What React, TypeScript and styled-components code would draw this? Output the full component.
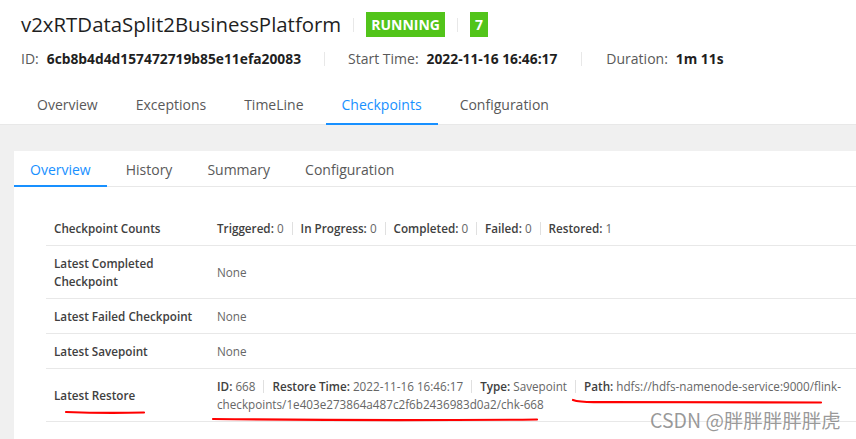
import React from "react";
import styled, { createGlobalStyle } from "styled-components";

const GlobalStyle = createGlobalStyle`
  html, body { margin: 0; padding: 0; background: #ffffff; }
  body { font-family: "Open Sans", "Noto Sans", "Liberation Sans", sans-serif; color: #262626; }
  * { box-sizing: border-box; }
`;

const Page = styled.div`
  position: relative;
  width: 856px;
  height: 439px;
  overflow: hidden;
  display: flex;
  flex-direction: column;
  background: #f0f0f0;
`;

const Header = styled.header`
  background: #ffffff;
  padding: 0 0 0 21px;
  border-bottom: 1px solid #e8e8e8;
  flex: none;
`;

const TitleRow = styled.div`
  display: flex;
  align-items: center;
  padding-top: 12px;
  height: 37px;
`;

const Title = styled.h1`
  margin: 0;
  font-size: 20.4px;
  font-weight: 400;
  color: #1f1f1f;
  line-height: 25px;
`;

const VSep = styled.span<{ $h?: number; $m?: number }>`
  display: inline-block;
  width: 1px;
  height: ${(p) => p.$h ?? 14}px;
  background: #e8e8e8;
  margin: 0 ${(p) => p.$m ?? 12}px;
`;

const Badge = styled.span`
  display: inline-flex;
  align-items: center;
  justify-content: center;
  height: 25px;
  padding: 0 5px;
  min-width: 17px;
  background: #52c41a;
  color: #ffffff;
  font-size: 14px;
  font-weight: 700;
`;

const MetaRow = styled.div`
  display: flex;
  align-items: center;
  margin-top: 12px;
  height: 20px;
  font-size: 14px;
  line-height: 20px;
`;

const MetaLabel = styled.span`
  color: #595959;
  margin-right: 8px;
`;

const MetaValue = styled.span`
  color: #1f1f1f;
  font-weight: 700;
  font-size: 13.8px;
`;

const NavBar = styled.nav`
  display: flex;
  gap: 6px;
  margin-top: 18px;
  margin-bottom: -1px;
`;

const NavTab = styled.div<{ $active?: boolean }>`
  padding: 0 16px;
  line-height: 36px;
  font-size: 14px;
  color: ${(p) => (p.$active ? "#1890ff" : "#595959")};
  border-bottom: 2px solid ${(p) => (p.$active ? "#1890ff" : "transparent")};
`;

const Content = styled.main`
  flex: 1;
  padding: 26px 0 0 14px;
`;

const Card = styled.section`
  background: #ffffff;
  height: 100%;
`;

const CardTabs = styled.div`
  display: flex;
  gap: 3px;
  border-bottom: 1px solid #e8e8e8;
  height: 36px;
`;

const CardTab = styled.div<{ $active?: boolean }>`
  padding: 8px 16px 4px;
  line-height: 22px;
  height: 36px;
  font-size: 14px;
  color: ${(p) => (p.$active ? "#1890ff" : "#595959")};
  border-bottom: 2px solid ${(p) => (p.$active ? "#1890ff" : "transparent")};
`;

const Table = styled.table`
  margin: 24px 0 0 32px;
  width: calc(100% - 32px);
  border-collapse: collapse;
  font-size: 11.7px;
  line-height: 18px;
`;

const Row = styled.tr`
  border-bottom: 1px solid #e8e8e8;
`;

const LabelCell = styled.td`
  width: 163px;
  padding: 8px 8px;
  font-weight: 600;
  color: #404040;
  vertical-align: middle;
`;

const ValueCell = styled.td`
  padding: 8px 8px;
  color: #666666;
  vertical-align: middle;
`;

const Key = styled.strong`
  font-weight: 600;
  color: #404040;
`;

const InlineSep = styled.span`
  display: inline-block;
  width: 1px;
  height: 13px;
  background: #e0e0e0;
  margin: 0 8px;
  vertical-align: -2px;
`;

const Marks = styled.svg`
  position: absolute;
  left: 0;
  top: 0;
  pointer-events: none;
`;

const Watermark = styled.div`
  position: absolute;
  left: 650px;
  top: 407px;
  font-family: "Noto Sans CJK SC", "Open Sans", sans-serif;
  font-size: 19.5px;
  line-height: 26px;
  color: rgba(120, 120, 120, 0.75);
  white-space: nowrap;
`;

const navTabs = ["Overview", "Exceptions", "TimeLine", "Checkpoints", "Configuration"];
const cardTabs = ["Overview", "History", "Summary", "Configuration"];

const counts: [string, string][] = [
  ["Triggered:", "0"],
  ["In Progress:", "0"],
  ["Completed:", "0"],
  ["Failed:", "0"],
  ["Restored:", "1"],
];

export default function App() {
  return (
    <>
      <GlobalStyle />
      <Page>
        <Header>
          <TitleRow>
            <Title>v2xRTDataSplit2BusinessPlatform</Title>
            <VSep />
            <Badge>RUNNING</Badge>
            <VSep />
            <Badge>7</Badge>
          </TitleRow>
          <MetaRow>
            <MetaLabel>ID:</MetaLabel>
            <MetaValue>6cb8b4d4d157472719b85e11efa20083</MetaValue>
            <VSep $m={23} />
            <MetaLabel>Start Time:</MetaLabel>
            <MetaValue>2022-11-16 16:46:17</MetaValue>
            <VSep $m={24} />
            <MetaLabel>Duration:</MetaLabel>
            <MetaValue>1m 11s</MetaValue>
          </MetaRow>
          <NavBar>
            {navTabs.map((t) => (
              <NavTab key={t} $active={t === "Checkpoints"}>
                {t}
              </NavTab>
            ))}
          </NavBar>
        </Header>
        <Content>
          <Card>
            <CardTabs>
              {cardTabs.map((t) => (
                <CardTab key={t} $active={t === "Overview"}>
                  {t}
                </CardTab>
              ))}
            </CardTabs>
            <Table>
              <tbody>
                <Row>
                  <LabelCell>Checkpoint Counts</LabelCell>
                  <ValueCell>
                    {counts.map(([k, v], i) => (
                      <React.Fragment key={k}>
                        {i > 0 && <InlineSep />}
                        <Key>{k}</Key> {v}
                      </React.Fragment>
                    ))}
                  </ValueCell>
                </Row>
                <Row>
                  <LabelCell>Latest Completed Checkpoint</LabelCell>
                  <ValueCell>None</ValueCell>
                </Row>
                <Row>
                  <LabelCell>Latest Failed Checkpoint</LabelCell>
                  <ValueCell>None</ValueCell>
                </Row>
                <Row>
                  <LabelCell>Latest Savepoint</LabelCell>
                  <ValueCell>None</ValueCell>
                </Row>
                <Row>
                  <LabelCell>Latest Restore</LabelCell>
                  <ValueCell>
                    <Key>ID:</Key> 668
                    <InlineSep />
                    <Key>Restore Time:</Key> 2022-11-16 16:46:17
                    <InlineSep />
                    <Key>Type:</Key> Savepoint
                    <InlineSep />
                    <Key>Path:</Key> hdfs://hdfs-namenode-service:9000/flink-checkpoints/1e403e273864a487c2f6b2436983d0a2/chk-668
                  </ValueCell>
                </Row>
              </tbody>
            </Table>
          </Card>
        </Content>
        <Marks width="856" height="439" viewBox="0 0 856 439">
          <path d="M66 412 Q105 413.5 144 412.5" stroke="#ff0000" strokeWidth="2.2" fill="none" strokeLinecap="round" />
          <path d="M213 419 Q375 421 537 419.5" stroke="#ff0000" strokeWidth="2.2" fill="none" strokeLinecap="round" />
          <path d="M573 400 Q580 402.5 600 402 L821 402.5" stroke="#ff0000" strokeWidth="2.2" fill="none" strokeLinecap="round" />
        </Marks>
        <Watermark>CSDN @胖胖胖胖胖虎</Watermark>
      </Page>
    </>
  );
}
